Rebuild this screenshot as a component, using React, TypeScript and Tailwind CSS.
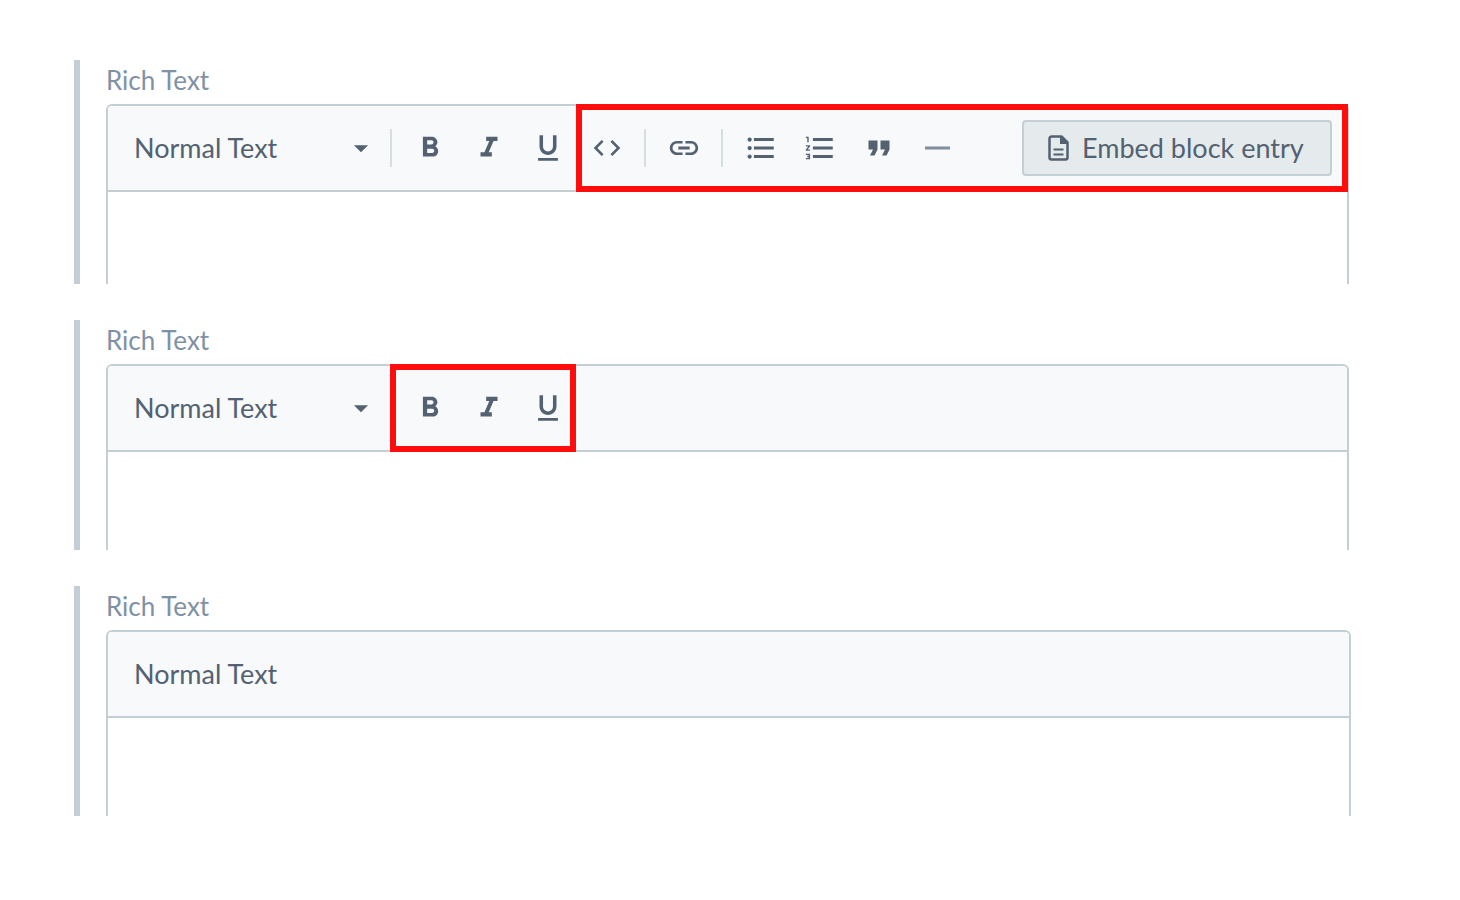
import React from 'react';
import {
  MdArrowDropDown,
  MdCode,
  MdFormatBold,
  MdFormatItalic,
  MdFormatListBulleted,
  MdFormatListNumbered,
  MdFormatQuote,
  MdFormatUnderlined,
  MdLink,
} from 'react-icons/md';

const styleActions = [
  { label: 'Bold', icon: <MdFormatBold size={34} /> },
  { label: 'Italic', icon: <MdFormatItalic size={34} /> },
  { label: 'Underline', icon: <MdFormatUnderlined size={34} /> },
];

const blockActions = [
  { label: 'Bulleted list', icon: <ListIcon /> },
  { label: 'Numbered list', icon: <MdFormatListNumbered size={34} /> },
  { label: 'Quote', icon: <MdFormatQuote size={36} /> },
  { label: 'Horizontal rule', icon: <RuleIcon /> },
];

function ListIcon() {
  return <MdFormatListBulleted size={34} />;
}

function RuleIcon() {
  return (
    <svg width="26" height="4" viewBox="0 0 26 4" fill="currentColor" opacity="0.7">
      <rect y="0.5" width="25" height="3" />
    </svg>
  );
}

function DocumentIcon() {
  return (
    <svg width="22" height="26" viewBox="0 0 22 26" fill="none" stroke="currentColor" strokeWidth="2.5" className="shrink-0">
      <path d="M13.5 1.5H3.500A2 2 0 0 0 1.500 3.500V22.500A2 2 0 0 0 3.500 24.500H17.500A2 2 0 0 0 19.500 22.500V7.500Z" strokeLinejoin="round" />
      <path d="M12 1V9H20L19 7L14 2Z" fill="currentColor" stroke="none" />
      <path d="M5.500 14.500H15.500M5.500 19.500H15.500" strokeWidth="2" />
    </svg>
  );
}

function ToolButton({ label, children }: { label: string; children: React.ReactNode }) {
  return (
    <button type="button" aria-label={label} className="flex h-14 w-[59px] items-center justify-center">
      {children}
    </button>
  );
}

function Separator() {
  return <div className="mx-2 h-[38px] w-0.5 bg-[#d5dfe3]" />;
}

type FieldProps = {
  id: string;
  className: string;
  highlight?: string;
  caret?: boolean;
  children?: React.ReactNode;
};

function RichTextField({ id, className, highlight, caret, children }: FieldProps) {
  return (
    <section className={`flex flex-col border-l-[6px] border-[#c3cfd5] pl-[26px] ${className}`}>
      <label htmlFor={id} className="h-11 shrink-0 text-[26px] leading-10 text-[#8091a5]">
        Rich Text
      </label>
      <div className="flex min-h-0 flex-1 flex-col rounded-t-md border-2 border-b-0 border-[#c3cfd5]">
        <div className="relative flex h-[86px] shrink-0 items-center rounded-t border-b-2 border-[#c3cfd5] bg-[#f7f9fa]">
          <div className="relative flex w-[274px] items-center">
            <select
              aria-label="Text style"
              className="h-14 w-full appearance-none bg-transparent pl-[26px] text-[27px]"
            >
              <option>Normal Text</option>
            </select>
            {caret && <MdArrowDropDown size={34} className="pointer-events-none absolute right-1" />}
          </div>
          {children}
          {highlight && (
            <div className={`pointer-events-none absolute -top-0.5 -bottom-0.5 border-[6px] border-[#ff0d0d] ${highlight}`} />
          )}
        </div>
        <textarea id={id} rows={1} className="min-h-0 w-full flex-1 resize-none px-[26px] py-4 text-[26px] outline-none" />
      </div>
    </section>
  );
}

export default function App() {
  return (
    <main className="flex min-h-screen flex-col gap-9 bg-white pt-[60px] pl-[74px] font-['Lato',sans-serif] text-[#536171]">
      <RichTextField id="full" className="mr-[111px] h-56" highlight="left-[468px] -right-px" caret>
        <Separator />
        {styleActions.map((a) => (
          <ToolButton key={a.label} label={a.label}>{a.icon}</ToolButton>
        ))}
        <ToolButton label="Code">
          <MdCode size={32} />
        </ToolButton>
        <Separator />
        <ToolButton label="Link">
          <MdLink size={34} />
        </ToolButton>
        <Separator />
        {blockActions.map((a) => (
          <ToolButton key={a.label} label={a.label}>{a.icon}</ToolButton>
        ))}
        <button
          type="button"
          className="mr-[15px] ml-auto flex h-14 min-w-[310px] items-center gap-3 rounded border-2 border-[#c3cfd5] bg-[#e5ebed] px-6 text-[27px] whitespace-nowrap"
        >
          <DocumentIcon />
          Embed block entry
        </button>
      </RichTextField>

      <RichTextField id="marks" className="mr-[111px] h-[230px]" highlight="left-[282px] w-[186px]" caret>
        <Separator />
        {styleActions.map((a) => (
          <ToolButton key={a.label} label={a.label}>{a.icon}</ToolButton>
        ))}
      </RichTextField>

      <RichTextField id="plain" className="mr-[109px] h-[230px]" />
    </main>
  );
}
